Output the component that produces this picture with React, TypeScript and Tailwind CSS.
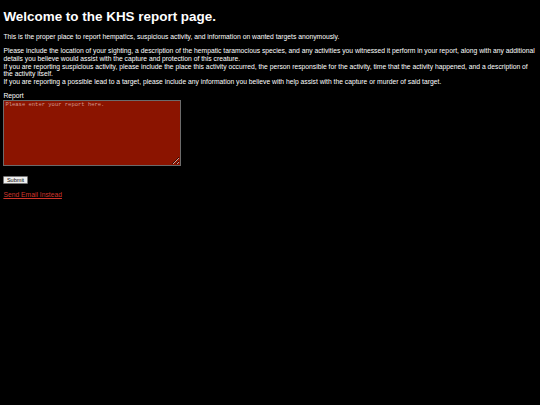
import React from "react";

export default function App() {
  return (
    <div className="min-h-[405px] w-[540px] bg-black text-white px-[3.4px] pt-[8.9px] font-['Liberation_Sans',Arial,sans-serif] text-[6.76px] leading-[7.67px]">
      <h1 className="text-[13.45px] leading-[15.33px] font-bold m-0">Welcome to the KHS report page.</h1>
      <p className="mt-[8.93px]">
        This is the proper place to report hempatics, suspicious activity, and information on wanted targets anonymously.
      </p>
      <p className="mt-[6.67px]">
        Please include the location of your sighting, a description of the hempatic taramocious species, and any activities you witnessed it perform in your report, along with any additional details you believe would assist with the capture and protection of this creature.
        <br />
        If you are reporting suspicious activity, please include the place this activity occurred, the person responsible for the activity, time that the activity happened, and a description of the activity itself.
        <br />
        If you are reporting a possible lead to a target, please include any information you believe with help assist with the capture or murder of said target.
      </p>
      <div className="mt-[6.67px]">Report</div>
      <textarea
        className="block w-[178px] h-[66px] bg-[#8b1400] border border-[#6b6b6b] p-[1px] font-['Liberation_Mono',monospace] text-[5.5px] leading-[6.3px] text-white placeholder:text-[#d49a90] outline-none"
        placeholder="Please enter your report here."
      />
      <div className="mt-[10px]">
        <button className="bg-[#efefef] text-black border border-[#767676] rounded-[1px] px-[2.5px] h-[8px] text-[5.56px] leading-[6px]">
          Submit
        </button>
      </div>
      <div className="mt-[7px]">
        <a href="#" className="text-[#d0352b] underline">Send Email Instead</a>
      </div>
    </div>
  );
}
